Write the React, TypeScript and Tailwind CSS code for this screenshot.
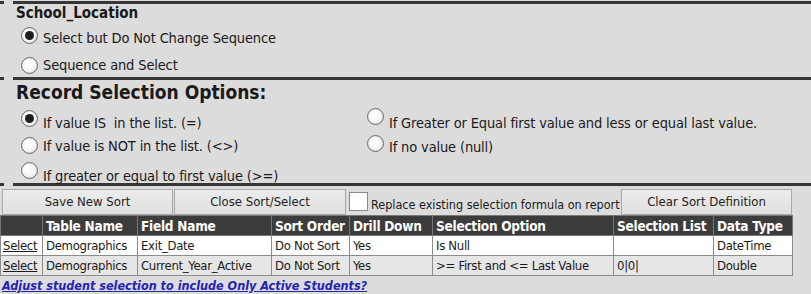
import React from "react";

const F = "font-['DejaVu_Sans_Condensed','DejaVu_Sans',sans-serif]";

function Circle({ checked }: { checked?: boolean }) {
  return (
    <div className="w-[17px] h-[17px] rounded-full border border-[#6f6f6f] bg-[radial-gradient(circle_at_40%_35%,#ffffff_0%,#f4f4f4_60%,#dedede_100%)] flex items-center justify-center shrink-0 shadow-[inset_0_0_1px_#999]">
      {checked && <div className="w-[9px] h-[9px] rounded-full bg-[#1e1e1e]" />}
    </div>
  );
}

function Radio({
  label,
  checked,
  circleTop,
  textTop,
  h,
}: {
  label: string;
  checked?: boolean;
  circleTop: string;
  textTop: string;
  h: string;
}) {
  return (
    <div className={`flex items-start ${h}`}>
      <div className={circleTop}>
        <Circle checked={checked} />
      </div>
      <div className={`${textTop} ml-[5px] text-[14.5px] leading-[18px] tracking-[-0.15px] text-[#1a1a1a] whitespace-pre`}>{label}</div>
    </div>
  );
}

function Btn({ label, w }: { label: string; w: string }) {
  return (
    <div
      className={`${w} h-[26px] border border-[#a9a9a9] bg-[linear-gradient(#ececec,#e0e0e0)] flex items-center justify-center text-[13px] text-[#222]`}
    >
      {label}
    </div>
  );
}

const rows = [
  ["Demographics", "Exit_Date", "Do Not Sort", "Yes", "Is Null", "", "DateTime"],
  ["Demographics", "Current_Year_Active", "Do Not Sort", "Yes", ">= First and <= Last Value", "0|0|", "Double"],
];

export default function App() {
  return (
    <div className={`w-[811px] h-[294px] bg-[#dcdcdc] overflow-hidden ${F} text-[#1a1a1a]`}>
      <div className="flex">
        {/* left strip */}
        <div className="w-[13px] shrink-0 flex flex-col">
          <div className="mt-[1px] h-[3px] w-[4px] bg-[#363636]" />
          <div className="h-[73px]" />
          <div className="h-[3px] w-[4px] bg-[#363636]" />
          <div className="h-[103px]" />
          <div className="h-[3px] w-[4px] bg-[#363636]" />
        </div>
        <div className="flex-1 pt-[1px]">
          {/* Section 1 */}
          <div className="border-y-[3px] border-[#363636] pl-[3px] h-[79px]">
            <div className="h-[18px] text-[15px] leading-[18px] font-bold">School_Location</div>
            <div className="pl-[5px]">
              <Radio label="Select but Do Not Change Sequence" checked circleTop="mt-[5px]" textTop="mt-[7px]" h="h-[30px]" />
              <Radio label="Sequence and Select" circleTop="mt-[5px]" textTop="mt-[4px]" h="h-[24px]" />
            </div>
          </div>
          {/* Section 2 */}
          <div className="border-b-[3px] border-[#363636] pl-[3px] h-[106px]">
            <div className="h-[24px] text-[19px] leading-[24px] font-bold">Record Selection Options:</div>
            <div className="grid grid-cols-[346px_1fr] pl-[5px]">
              <div>
                <Radio label="If value IS  in the list. (=)" checked circleTop="mt-[6px]" textTop="mt-[10px]" h="h-[27px]" />
                <Radio label="If value is NOT in the list. (<>)" circleTop="mt-[6px]" textTop="mt-[6px]" h="h-[27px]" />
                <Radio label="If greater or equal to first value (>=)" circleTop="mt-[4px]" textTop="mt-[9px]" h="h-[25px]" />
              </div>
              <div>
                <Radio label="If Greater or Equal first value and less or equal last value." circleTop="mt-[4px]" textTop="mt-[10px]" h="h-[27px]" />
                <Radio label="If no value (null)" circleTop="mt-[4px]" textTop="mt-[7px]" h="h-[27px]" />
              </div>
            </div>
          </div>
        </div>
      </div>
      {/* Buttons */}
      <div className="mt-[2px] flex items-start h-[27px]">
        <div className="ml-[2px] mt-[1px]">
          <Btn label="Save New Sort" w="w-[171px]" />
        </div>
        <div className="ml-[1px] mt-[1px]">
          <Btn label="Close Sort/Select" w="w-[172px]" />
        </div>
        <div className="ml-[3px] mt-[4px] w-[19px] h-[19px] border border-[#8a8a8a] bg-white" />
        <div className="ml-[3px] mt-[9px] text-[12.5px] leading-[16px] whitespace-nowrap w-[250px]">
          Replace existing selection formula on report
        </div>
        <div className="mt-[1px]">
          <Btn label="Clear Sort Definition" w="w-[171px]" />
        </div>
      </div>
      {/* Table */}
      <table className="table-fixed border-collapse w-[792px] text-[13px]">
        <colgroup>
          <col className="w-[42px]" />
          <col className="w-[95px]" />
          <col className="w-[134px]" />
          <col className="w-[78px]" />
          <col className="w-[83px]" />
          <col className="w-[181px]" />
          <col className="w-[100px]" />
          <col className="w-[79px]" />
        </colgroup>
        <thead>
          <tr className="h-[20px] bg-[#3c3c3c] text-white text-left text-[13.5px] tracking-[-0.25px]">
            {["", "Table Name", "Field Name", "Sort Order", "Drill Down", "Selection Option", "Selection List", "Data Type"].map((h, i) => (
              <th key={i} className="border border-[#777] px-[3px] py-0 leading-[18px] font-bold whitespace-nowrap">
                {h}
              </th>
            ))}
          </tr>
        </thead>
        <tbody>
          {rows.map((r, ri) => (
            <tr key={ri} className={`h-[20px] tracking-[-0.3px] ${ri === 0 ? "bg-white" : "bg-[#e6e6e6]"}`}>
              <td className="border border-[#8c8c8c] px-[2px] py-0 leading-[18px]">
                <span className="underline">Select</span>
              </td>
              {r.map((c, ci) => (
                <td key={ci} className="border border-[#8c8c8c] px-[3px] py-0 leading-[18px] whitespace-nowrap overflow-hidden">
                  {c}
                </td>
              ))}
            </tr>
          ))}
        </tbody>
      </table>
      <div className="mt-[2px] ml-[2px] text-[12.5px] leading-[16px] font-bold italic underline text-[#2323b4]">
        Adjust student selection to include Only Active Students?
      </div>
    </div>
  );
}
